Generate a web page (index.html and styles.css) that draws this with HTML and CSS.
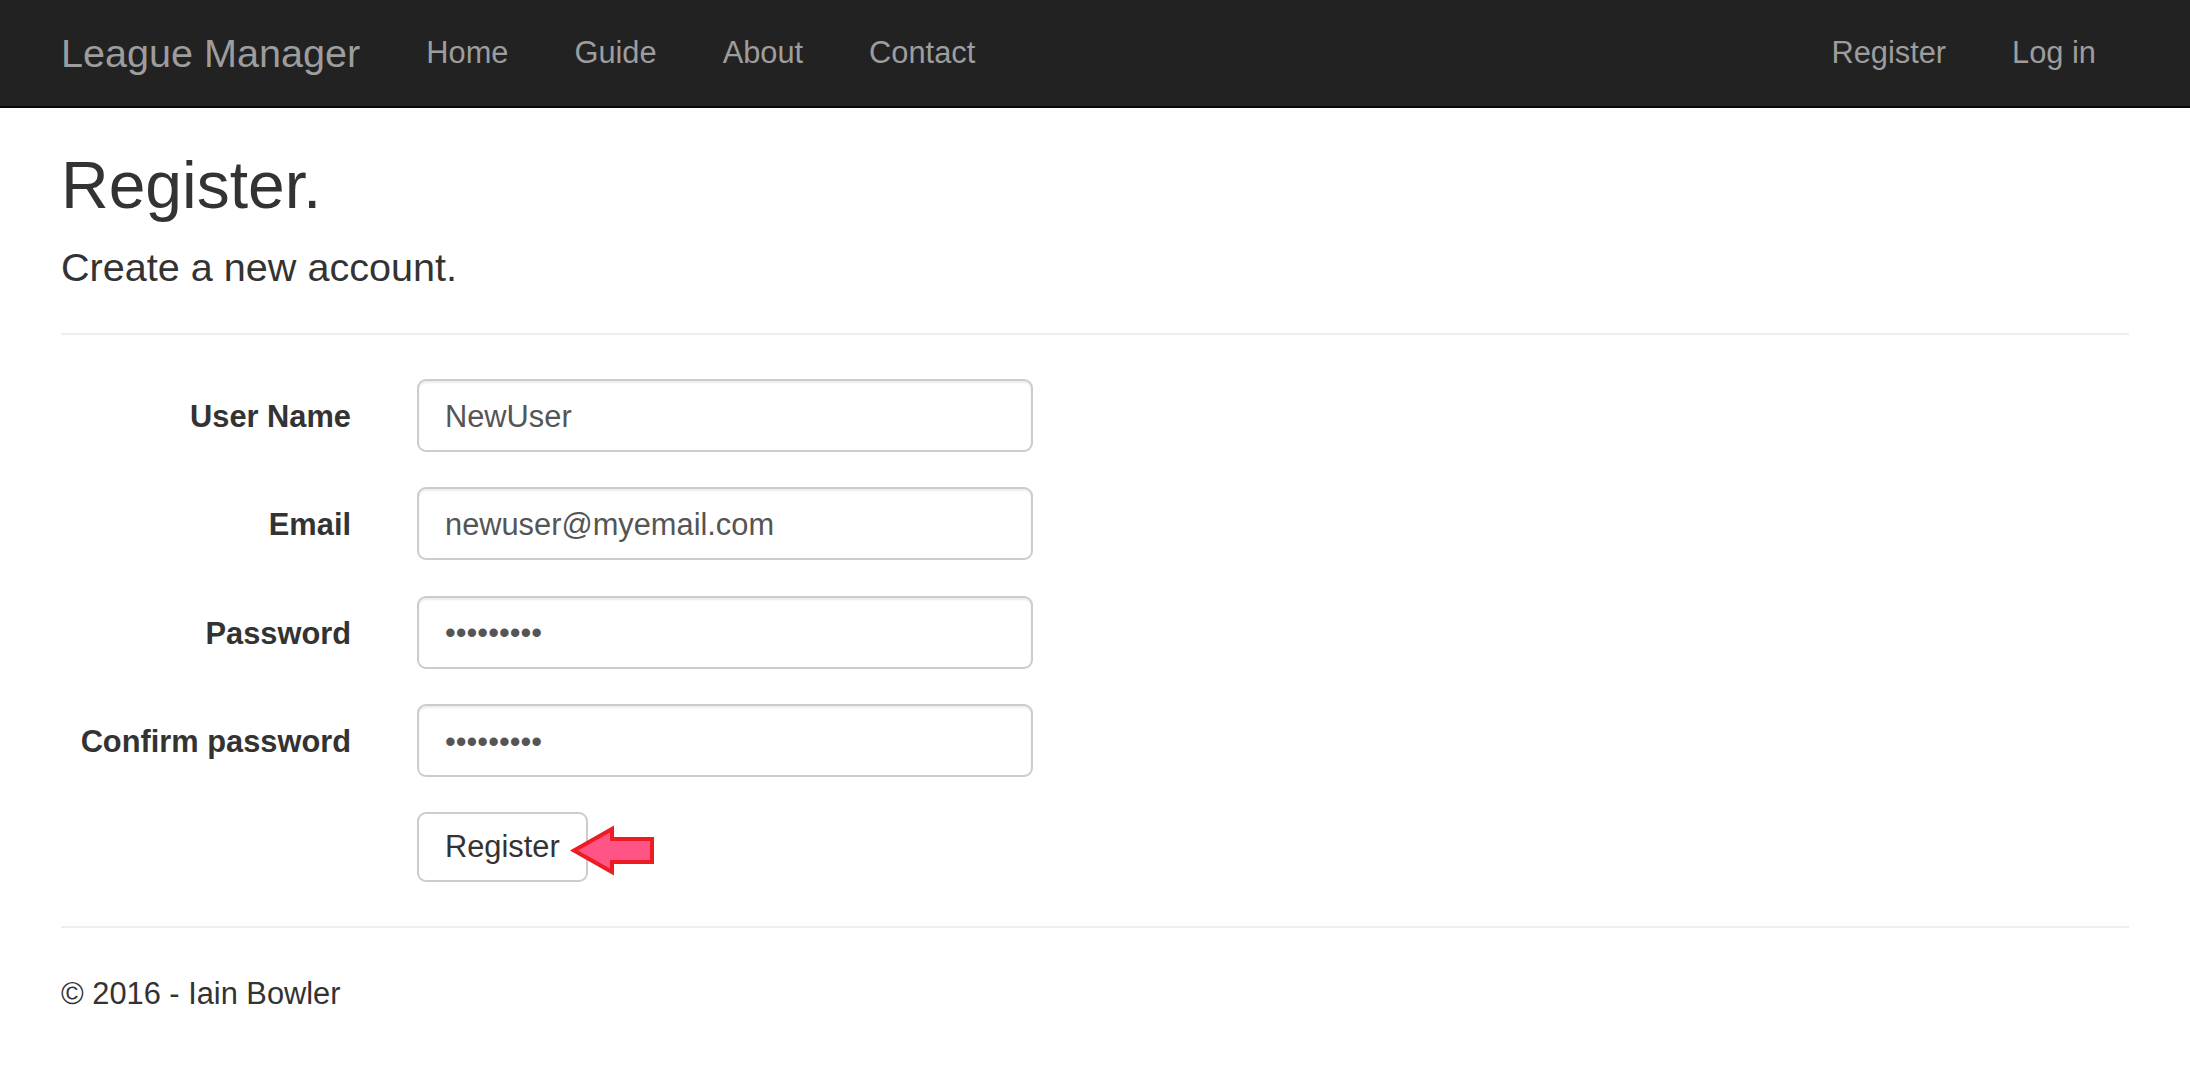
FILE: index.html
```html
<!DOCTYPE html>
<html lang="en">
<head>
<meta charset="utf-8">
<title>Register - League Manager</title>
<link rel="stylesheet" href="styles.css">
</head>
<body>
<header class="navbar">
  <div class="container nav-inner">
    <a class="brand" href="#">League Manager</a>
    <ul class="nav">
      <li><a href="#">Home</a></li>
      <li><a href="#">Guide</a></li>
      <li><a href="#">About</a></li>
      <li><a href="#">Contact</a></li>
    </ul>
    <ul class="nav nav-right">
      <li><a href="#">Register</a></li>
      <li><a href="#">Log in</a></li>
    </ul>
  </div>
</header>
<main class="container body-content">
  <h2 class="title">Register.</h2>
  <h4 class="subtitle">Create a new account.</h4>
  <hr class="rule rule-top">
  <form class="form">
    <div class="form-group">
      <label class="control-label" for="un">User Name</label>
      <input class="form-control" id="un" type="text" value="NewUser">
    </div>
    <div class="form-group">
      <label class="control-label" for="em">Email</label>
      <input class="form-control" id="em" type="text" value="newuser@myemail.com">
    </div>
    <div class="form-group">
      <label class="control-label" for="pw">Password</label>
      <input class="form-control" id="pw" type="password" value="123456789">
    </div>
    <div class="form-group">
      <label class="control-label" for="cpw">Confirm password</label>
      <input class="form-control" id="cpw" type="password" value="123456789">
    </div>
    <div class="form-group last">
      <span class="spacer"></span>
      <div class="btn-wrap">
        <button class="btn" type="button">Register</button>
        <svg class="arrow" width="86" height="52" viewBox="0 0 86 52" aria-hidden="true">
          <polygon points="5,26.5 43,5 43,15 83,15 83,38 43,38 43,48" fill="#ff5486" stroke="#ed1c24" stroke-width="4" stroke-linejoin="miter"/>
        </svg>
      </div>
    </div>
  </form>
  <hr class="rule rule-bottom">
  <footer class="footer">
    <p>&copy; 2016 - Iain Bowler</p>
  </footer>
</main>
</body>
</html>
```
FILE: styles.css
```css
* {
  box-sizing: border-box;
}

html, body {
  margin: 0;
  padding: 0;
}

body {
  font-family: "Liberation Sans", Arial, Helvetica, sans-serif;
  font-size: 30.8px;
  line-height: 44px;
  color: #333;
  background: #fff;
}

.container {
  width: 2134px;
  margin: 0 auto;
  padding: 0 33px;
}

/* Navbar */
.navbar {
  background: #222;
  border-bottom: 2px solid #080808;
}

.nav-inner {
  display: flex;
  height: 106px;
}

.brand {
  display: block;
  font-size: 39.6px;
  line-height: 44px;
  padding: 31px 33px 31px 0;
  color: #9d9d9d;
  text-decoration: none;
  white-space: nowrap;
}

.nav {
  list-style: none;
  margin: 0;
  padding: 0;
  display: flex;
}

.nav-right {
  margin-left: auto;
}

.nav a {
  display: block;
  padding: 31px 33px 31px;
  line-height: 44px;
  color: #9d9d9d;
  text-decoration: none;
  white-space: nowrap;
}

/* Headings */
.title {
  margin: 41px 0 0;
  font-size: 66px;
  line-height: 72.6px;
  font-weight: normal;
  color: #333;
}

.subtitle {
  margin: 24px 0 0;
  font-size: 39.6px;
  line-height: 43.6px;
  font-weight: normal;
  color: #333;
}

.rule {
  border: 0;
  border-top: 2px solid #eee;
  height: 0;
  margin: 44px 0;
}

/* Form */
.form {
  margin: 0;
}

.form-group {
  display: grid;
  grid-template-columns: 290px 616px;
  column-gap: 66px;
  margin-bottom: 35.3px;
}

.form-group.last {
  margin-bottom: 0;
}

.control-label {
  text-align: right;
  font-weight: bold;
  padding-top: 16px;
  line-height: 44px;
  white-space: nowrap;
}

.form-control {
  display: block;
  width: 616px;
  height: 73px;
  padding: 2px 26px 0;
  font-family: "Liberation Sans", Arial, Helvetica, sans-serif;
  font-size: 30.8px;
  color: #555;
  background: #fff;
  border: 2px solid #ccc;
  border-radius: 9px;
  box-shadow: inset 0 2px 2px rgba(0, 0, 0, 0.075);
  outline: none;
}

.btn-wrap {
  position: relative;
  justify-self: start;
}

.btn {
  display: block;
  font-family: "Liberation Sans", Arial, Helvetica, sans-serif;
  font-size: 30.8px;
  line-height: 44px;
  padding: 11px 26px 11px;
  color: #333;
  background: #fff;
  border: 2px solid #ccc;
  border-radius: 9px;
  cursor: pointer;
}

.arrow {
  position: absolute;
  left: 152px;
  top: 12px;
  overflow: visible;
}

/* Footer */
.footer p {
  margin: 0;
}
```
